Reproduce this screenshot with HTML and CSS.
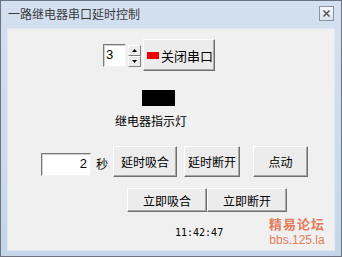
FILE: index.html
```html
<!DOCTYPE html>
<html>
<head>
  <title>一路继电器串口延时控制</title>
  <link rel="stylesheet" href="styles.css">
</head>
<body>
  <div class="window">
    <div class="titlebar">
      <span class="title">一路继电器串口延时控制</span>
      <span class="close">
        <svg width="9" height="9" viewBox="0 0 9 9">
          <path d="M1.5 1.5 L7.5 7.5 M7.5 1.5 L1.5 7.5" stroke="#555" stroke-width="1.5"/>
        </svg>
      </span>
    </div>

    <div class="client">
      <div class="row-port">
        <div class="edit port-edit">3</div>
        <div class="spin">
          <span class="spin-btn">
            <svg width="5" height="3" viewBox="0 0 5 3"><path d="M2.5 0 L5 3 L0 3 Z" fill="#000"/></svg>
          </span>
          <span class="spin-btn">
            <svg width="5" height="3" viewBox="0 0 5 3"><path d="M0 0 L5 0 L2.5 3 Z" fill="#000"/></svg>
          </span>
        </div>
        <button class="btn btn-port"><span class="led-red"></span>关闭串口</button>
      </div>

      <div class="lamp"></div>
      <div class="lamp-label">继电器指示灯</div>

      <div class="row-delay">
        <div class="edit delay-edit">2</div>
        <span class="unit">秒</span>
        <button class="btn btn-delay1">延时吸合</button>
        <button class="btn btn-delay2">延时断开</button>
        <button class="btn btn-jog">点动</button>
      </div>

      <div class="row-now">
        <button class="btn btn-now">立即吸合</button>
        <button class="btn btn-now">立即断开</button>
      </div>

      <div class="clock">11:42:47</div>
    </div>

    <div class="watermark">
      <div class="wm-cn">精易论坛</div>
      <div class="wm-en">bbs.125.la</div>
    </div>
  </div>
</body>
</html>
```

FILE: styles.css
```css
body {
  margin: 0;
  background: #cfdcec;
  font-family: "Noto Sans CJK SC", "Liberation Sans", sans-serif;
  font-size: 12px;
  color: #000;
}

.window {
  position: relative;
  width: 342px;
  height: 257px;
  box-sizing: border-box;
  border: 1px solid #6b7480;
  background: linear-gradient(#d3e0f0, #c6d6ea);
  display: flex;
  flex-direction: column;
}

.titlebar {
  height: 27px;
  display: flex;
  align-items: center;
  padding: 0 7px 0 7px;
}

.title {
  flex: 1;
  font-size: 12px;
  line-height: 14px;
  color: #3a3a3a;
  margin-top: -2px;
}

.close {
  width: 13px;
  height: 13px;
  border: 1px solid #8a94a0;
  background: linear-gradient(#f6f8fb, #dbe3ec);
  display: flex;
  align-items: center;
  justify-content: center;
  margin-top: -2px;
}

.client {
  margin: 0 6px 0 6px;
  height: 221px;
  background: #f0f0f0;
  border: 1px solid #e2e9f2;
  display: flex;
  flex-direction: column;
  align-items: flex-start;
}

.edit {
  box-sizing: border-box;
  background: #fff;
  border: 1px solid;
  border-color: #7a7a7a #f4f4f4 #f4f4f4 #7a7a7a;
  box-shadow: inset 1px 1px 0 #d0d0d0;
  font-family: "Liberation Sans", sans-serif;
  font-size: 13px;
  line-height: 20px;
}

.row-port {
  display: flex;
  align-items: center;
  margin: 10px 0 0 95px;
}

.port-edit {
  width: 23px;
  height: 23px;
  padding-left: 2px;
  margin-top: 1px;
}

.spin {
  display: flex;
  flex-direction: column;
  margin-left: 2px;
  margin-top: 1px;
}

.spin-btn {
  box-sizing: border-box;
  width: 13px;
  height: 11px;
  border: 1px solid;
  border-color: #fff #808080 #808080 #fff;
  background: #ececec;
  display: flex;
  align-items: center;
  justify-content: center;
}

.btn {
  box-sizing: border-box;
  margin: 0;
  padding: 0;
  background: #ececec;
  border: 1px solid;
  border-color: #fff #6f6f6f #6f6f6f #fff;
  box-shadow: inset -1px -1px 0 #a8a8a8;
  font-family: "Noto Sans CJK SC", sans-serif;
  font-size: 12px;
  color: #000;
  display: flex;
  align-items: center;
  justify-content: center;
}

.btn-port {
  width: 72px;
  height: 32px;
  margin-left: 2px;
  font-size: 13px;
  justify-content: flex-start;
  padding-left: 3px;
}

.led-red {
  width: 12px;
  height: 7px;
  background: #ec0000;
  margin-right: 2px;
}

.lamp {
  width: 33px;
  height: 16px;
  background: #000;
  margin: 19px 0 0 134px;
}

.lamp-label {
  margin: 7px 0 0 107px;
  font-size: 12px;
  line-height: 16px;
}

.row-delay {
  display: flex;
  align-items: flex-start;
  margin: 17px 0 0 33px;
}

.delay-edit {
  width: 50px;
  height: 23px;
  margin-top: 7px;
  text-align: right;
  padding-right: 3px;
}

.unit {
  margin: 10px 0 0 5px;
  line-height: 16px;
}

.btn-delay1 {
  width: 64px;
  height: 31px;
  margin-left: 5px;
}

.btn-delay2 {
  width: 56px;
  height: 31px;
  margin-left: 7px;
}

.btn-jog {
  width: 55px;
  height: 31px;
  margin-left: 13px;
}

.row-now {
  display: flex;
  margin: 11px 0 0 119px;
}

.btn-now {
  width: 80px;
  height: 24px;
}

.clock {
  margin: 14px 0 0 167px;
  font-family: "DejaVu Sans Mono", monospace;
  font-size: 10px;
  line-height: 14px;
}

.watermark {
  position: absolute;
  left: 268px;
  top: 214px;
  color: #e2704d;
  opacity: 0.9;
  text-align: center;
}

.wm-cn {
  font-size: 13px;
  font-weight: bold;
  line-height: 18px;
  letter-spacing: 1px;
}

.wm-en {
  font-family: "Liberation Sans", sans-serif;
  font-size: 12px;
  line-height: 14px;
}
```
